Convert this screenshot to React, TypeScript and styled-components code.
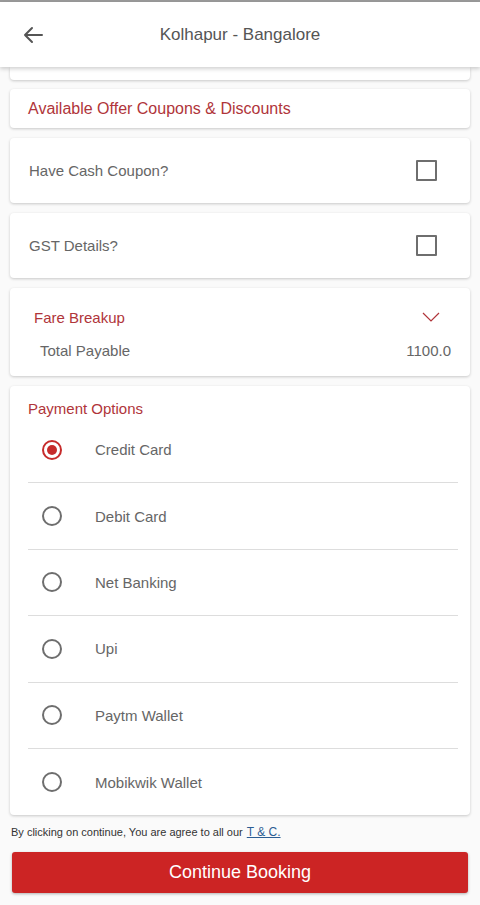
import styled, { createGlobalStyle } from 'styled-components';

const GlobalStyle = createGlobalStyle`
  html, body {
    margin: 0;
    padding: 0;
    background: #fafafa;
    font-family: "Liberation Sans", Arial, sans-serif;
  }
  * { box-sizing: border-box; }
`;

const Page = styled.div`
  width: 480px;
  min-height: 905px;
  display: flex;
  flex-direction: column;
  border-top: 2px solid #9a9a9a;
`;

const Header = styled.header`
  position: relative;
  z-index: 2;
  height: 65px;
  display: flex;
  align-items: center;
  background: #fff;
  box-shadow: 0 2px 4px rgba(0, 0, 0, 0.18);
  padding-left: 22px;

  h1 {
    flex: 1;
    margin: 0 0 0 -44px;
    text-align: center;
    font-size: 17px;
    font-weight: 400;
    color: #555;
  }
`;

const BackButton = styled.button`
  width: 22px;
  height: 22px;
  padding: 0;
  border: 0;
  background: none;
  display: flex;
  align-items: center;
  justify-content: center;
`;

const Content = styled.main`
  display: flex;
  flex-direction: column;
  gap: 10px;
  padding: 0 10px;
`;

const Card = styled.section`
  background: #fff;
  border-radius: 4px;
  box-shadow: 0 1px 3px rgba(0, 0, 0, 0.2);
`;

const ClippedCard = styled(Card)`
  height: 13px;
  border-radius: 0 0 4px 4px;
  margin-bottom: -1px;
`;

const OfferCard = styled(Card)`
  height: 39px;
  display: flex;
  align-items: center;
  padding-left: 18px;
  font-size: 16px;
  color: #b0353a;
`;

const ToggleCard = styled(Card)`
  height: 65px;
  display: flex;
  align-items: center;
  justify-content: space-between;
  padding: 0 33px 0 19px;
  font-size: 15px;
  color: #666;
`;

const CheckBox = styled.span`
  width: 21px;
  height: 21px;
  border: 2px solid #6e6e6e;
  border-radius: 1px;
`;

const FareCard = styled(Card)`
  height: 88px;
  padding: 19px 19px 0 24px;
  display: flex;
  flex-direction: column;
  gap: 13px;
`;

const FareRow = styled.div<{ $inset?: boolean }>`
  display: flex;
  align-items: center;
  justify-content: space-between;
  height: 20px;
  padding-left: ${(p) => (p.$inset ? '6px' : '0')};
  font-size: 15px;
  color: ${(p) => (p.$inset ? '#666' : '#b0353a')};

  svg {
    margin-right: 11px;
  }
`;

const PaymentCard = styled(Card)`
  padding: 15px 12px 0 18px;
`;

const SectionTitle = styled.h2`
  margin: 0;
  height: 16px;
  line-height: 16px;
  font-size: 15px;
  font-weight: 400;
  color: #b0353a;
`;

const OptionList = styled.ul`
  list-style: none;
  margin: 0;
  padding: 0;
`;

const Option = styled.li`
  height: 66.4px;
  display: flex;
  align-items: center;
  gap: 33px;
  padding-left: 14px;
  font-size: 15px;
  color: #666;
  border-bottom: 1px solid #ddd;

  &:last-child {
    border-bottom: 0;
  }
`;

const Radio = styled.span<{ $checked?: boolean }>`
  width: 20px;
  height: 20px;
  border-radius: 50%;
  border: 2px solid ${(p) => (p.$checked ? '#c62b2b' : '#6e6e6e')};
  display: flex;
  align-items: center;
  justify-content: center;

  &::after {
    content: '';
    width: 10px;
    height: 10px;
    border-radius: 50%;
    background: ${(p) => (p.$checked ? '#c62b2b' : 'transparent')};
  }
`;

const Terms = styled.p`
  margin: 10px 0 0 11px;
  font-size: 11px;
  color: #333;

  a {
    color: #2c5d93;
    margin-left: 4px;
    font-size: 12px;
  }
`;

const ContinueButton = styled.button`
  margin: 13px 12px 0;
  height: 41px;
  border: 0;
  border-radius: 3px;
  background: #cc2424;
  color: #fff;
  font-family: inherit;
  font-size: 18px;
  box-shadow: 0 1px 3px rgba(0, 0, 0, 0.3);
`;

const options = ['Credit Card', 'Debit Card', 'Net Banking', 'Upi', 'Paytm Wallet', 'Mobikwik Wallet'];

export default function App() {
  return (
    <Page>
      <GlobalStyle />
      <Header>
        <BackButton aria-label="Back">
          <svg width="20" height="18" viewBox="0 0 20 18" fill="none" stroke="#555" strokeWidth="2" strokeLinecap="round" strokeLinejoin="round">
            <path d="M19 9H2M9 2L2 9l7 7" />
          </svg>
        </BackButton>
        <h1>Kolhapur - Bangalore</h1>
      </Header>
      <Content>
        <ClippedCard />
        <OfferCard>Available Offer Coupons &amp; Discounts</OfferCard>
        <ToggleCard>
          Have Cash Coupon?
          <CheckBox />
        </ToggleCard>
        <ToggleCard>
          GST Details?
          <CheckBox />
        </ToggleCard>
        <FareCard>
          <FareRow>
            Fare Breakup
            <svg width="18" height="10" viewBox="0 0 18 10" fill="none" stroke="#b0353a" strokeWidth="1.2">
              <path d="M1 1l8 8 8-8" />
            </svg>
          </FareRow>
          <FareRow $inset>
            Total Payable
            <span>1100.0</span>
          </FareRow>
        </FareCard>
        <PaymentCard>
          <SectionTitle>Payment Options</SectionTitle>
          <OptionList>
            {options.map((o, i) => (
              <Option key={o}>
                <Radio $checked={i === 0} />
                {o}
              </Option>
            ))}
          </OptionList>
        </PaymentCard>
      </Content>
      <Terms>
        By clicking on continue, You are agree to all our<a href="#">T &amp; C.</a>
      </Terms>
      <ContinueButton>Continue Booking</ContinueButton>
    </Page>
  );
}
